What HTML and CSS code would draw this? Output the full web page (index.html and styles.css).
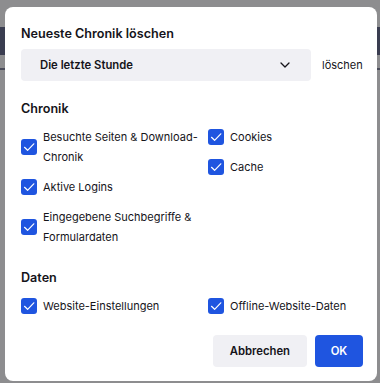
FILE: index.html
```html
<!DOCTYPE html>
<html lang="de">
<head>
  <meta charset="UTF-8" />
  <meta name="viewport" content="width=device-width, initial-scale=1.0"/>
  <title>Neueste Chronik löschen</title>
  <link rel="stylesheet" href="styles.css">
</head>
<body>
  <div class="backdrop">
    <div class="band band-dark"></div>
    <div class="band band-line"></div>
  </div>

  <div class="dialog">
    <h1>Neueste Chronik löschen</h1>

    <div class="range-row">
      <div class="select">
        <span>Die letzte Stunde</span>
        <svg class="chevron" width="12" height="8" viewBox="0 0 12 8">
          <path d="M2 2 L6 6 L10 2" fill="none" stroke="#15141a" stroke-width="1.3" stroke-linecap="round" stroke-linejoin="round"/>
        </svg>
      </div>
      <span class="range-label">löschen</span>
    </div>

    <h2>Chronik</h2>
    <div class="options">
      <div class="col">
        <label class="check">
          <span class="box"><svg viewBox="0 0 16 16"><path d="M3.5 8.3 L6.6 11.3 L12.8 4.8" /></svg></span>
          <span>Besuchte Seiten &amp; Download-<br>Chronik</span>
        </label>
        <label class="check">
          <span class="box"><svg viewBox="0 0 16 16"><path d="M3.5 8.3 L6.6 11.3 L12.8 4.8" /></svg></span>
          <span>Aktive Logins</span>
        </label>
        <label class="check">
          <span class="box"><svg viewBox="0 0 16 16"><path d="M3.5 8.3 L6.6 11.3 L12.8 4.8" /></svg></span>
          <span>Eingegebene Suchbegriffe &amp;<br>Formulardaten</span>
        </label>
      </div>
      <div class="col">
        <label class="check">
          <span class="box"><svg viewBox="0 0 16 16"><path d="M3.5 8.3 L6.6 11.3 L12.8 4.8" /></svg></span>
          <span>Cookies</span>
        </label>
        <label class="check">
          <span class="box"><svg viewBox="0 0 16 16"><path d="M3.5 8.3 L6.6 11.3 L12.8 4.8" /></svg></span>
          <span>Cache</span>
        </label>
      </div>
    </div>

    <h2 class="data-title">Daten</h2>
    <div class="options">
      <div class="col">
        <label class="check">
          <span class="box"><svg viewBox="0 0 16 16"><path d="M3.5 8.3 L6.6 11.3 L12.8 4.8" /></svg></span>
          <span>Website-Einstellungen</span>
        </label>
      </div>
      <div class="col">
        <label class="check">
          <span class="box"><svg viewBox="0 0 16 16"><path d="M3.5 8.3 L6.6 11.3 L12.8 4.8" /></svg></span>
          <span>Offline-Website-Daten</span>
        </label>
      </div>
    </div>

    <div class="buttons">
      <button class="btn">Abbrechen</button>
      <button class="btn primary">OK</button>
    </div>
  </div>
</body>
</html>
```

FILE: styles.css
```css
body {
  margin: 0;
  width: 380px;
  height: 383px;
  background: #8d8d8f;
  font-family: Inter, "Liberation Sans", sans-serif;
  color: #15141a;
  position: relative;
  overflow: hidden;
}

.backdrop {
  position: absolute;
  inset: 0;
}

.band {
  position: absolute;
  left: 0;
  right: 0;
}

.band-dark {
  top: 27px;
  height: 28px;
  background: #3a3d50;
}

.band-line {
  top: 68px;
  height: 2px;
  background: #4a4c5a;
}

.dialog {
  position: relative;
  margin: 7px 0 0 5px;
  width: 372px;
  height: 374px;
  box-sizing: border-box;
  background: #fff;
  border-radius: 8px;
  padding: 17px 14px 0 16px;
}

h1 {
  margin: 0;
  font-size: 12.6px;
  font-weight: 600;
  line-height: 20px;
}

h2 {
  margin: 18px 0 8px;
  font-size: 12.6px;
  font-weight: 600;
  line-height: 20px;
}

h2.data-title {
  margin-top: 21px;
}

.range-row {
  display: flex;
  align-items: center;
  margin-top: 5px;
}

.select {
  width: 290px;
  height: 32px;
  box-sizing: border-box;
  background: #f0f0f4;
  border-radius: 4px;
  display: flex;
  align-items: center;
  justify-content: space-between;
  padding: 0 20px 0 19px;
  font-size: 11.3px;
  font-weight: 600;
}

.range-label {
  margin-left: 11px;
  font-size: 11px;
}

.options {
  display: flex;
}

.col {
  display: flex;
  flex-direction: column;
  gap: 10px;
}

.col:first-child {
  width: 187px;
}

.check {
  display: flex;
  align-items: center;
  gap: 6px;
  font-size: 11px;
  line-height: 20px;
}

.box {
  flex: none;
  width: 16px;
  height: 16px;
  border-radius: 3px;
  background: #1f55e0;
  display: block;
}

.box svg {
  display: block;
  width: 16px;
  height: 16px;
}

.box path {
  fill: none;
  stroke: #fff;
  stroke-width: 1.2;
  stroke-linecap: round;
  stroke-linejoin: round;
}

.buttons {
  display: flex;
  justify-content: flex-end;
  gap: 8px;
  margin-top: 19px;
}

.btn {
  height: 32px;
  border: none;
  border-radius: 4px;
  background: #f0f0f4;
  color: #15141a;
  font-family: inherit;
  font-size: 11.3px;
  font-weight: 600;
  padding: 0 17px;
}

.btn.primary {
  background: #1f55e0;
  color: #fff;
  width: 48px;
  padding: 0;
}
```
